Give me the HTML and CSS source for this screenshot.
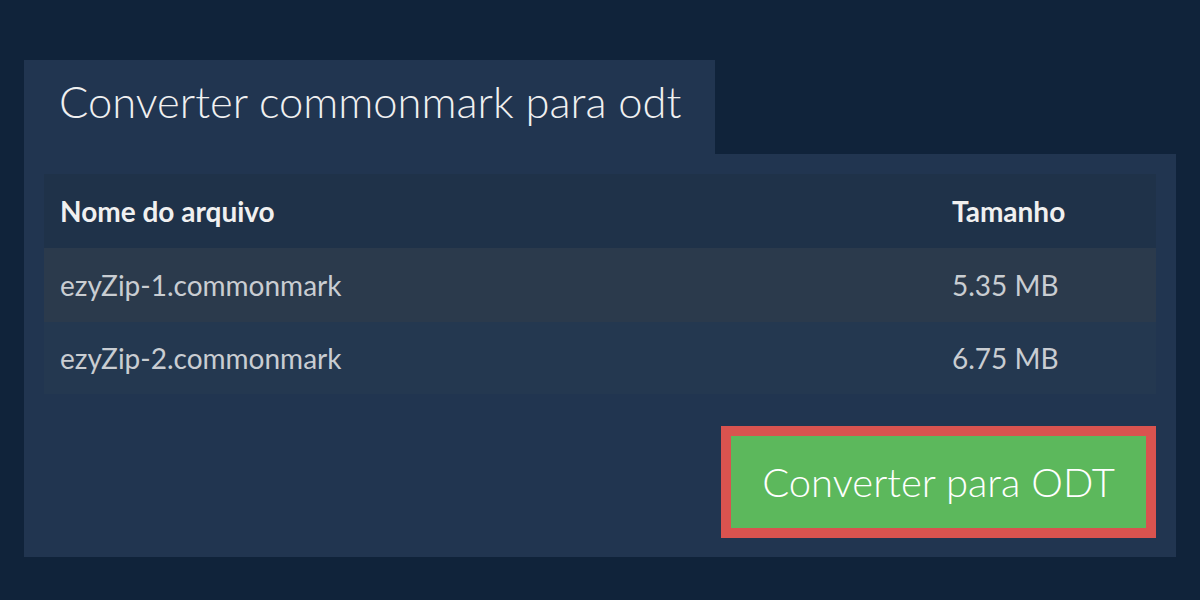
FILE: index.html
```html
<!DOCTYPE html>
<html lang="pt">
<head>
<meta charset="utf-8">
<title>Converter commonmark para odt</title>
<link rel="stylesheet" href="styles.css">
</head>
<body>
<main class="page">
  <div class="tab"><h1 class="title">Converter commonmark para odt</h1></div>
  <section class="panel">
    <table class="files">
      <thead>
        <tr><th class="col-name">Nome do arquivo</th><th class="col-size">Tamanho</th></tr>
      </thead>
      <tbody>
        <tr class="odd"><td>ezyZip-1.commonmark</td><td>5.35 MB</td></tr>
        <tr class="even"><td>ezyZip-2.commonmark</td><td>6.75 MB</td></tr>
      </tbody>
    </table>
    <div class="actions">
      <button class="convert">Converter para ODT</button>
    </div>
  </section>
</main>
</body>
</html>
```
FILE: styles.css
```css
html, body {
  margin: 0;
  padding: 0;
  background: #10233a;
  font-family: Lato, "Liberation Sans", sans-serif;
}
.page {
  padding: 60px 24px 0 24px;
}
.tab {
  display: inline-block;
  background: #213550;
  width: 691px;
  height: 94px;
  box-sizing: border-box;
  padding: 0 0 0 35px;
}
.title {
  margin: 0;
  font-weight: 300;
  font-size: 43.5px;
  line-height: 82px;
  color: #f0f0f0;
}
.panel {
  background: #213550;
  padding: 20px 20px 19px 20px;
  display: flex;
  flex-direction: column;
}
.files {
  width: 100%;
  border-collapse: collapse;
  font-size: 28px;
}
.files th, .files td {
  text-align: left;
  padding: 0 16px;
  height: 74px;
}
.files th {
  background: #1f3249;
  color: #f0f0f0;
  font-weight: 700;
}
.files td {
  color: #c9cdd2;
  font-weight: 400;
}
.col-size {
  width: 188px;
}
.odd td { background: #2b3a4c; }
.even td { background: #243850; height: 72px; }
.actions {
  display: flex;
  justify-content: flex-end;
  padding-top: 32px;
}
.convert {
  width: 435px;
  height: 112px;
  box-sizing: border-box;
  border: 10px solid #d9534f;
  background: #5cb85c;
  color: #ffffff;
  font-family: Lato, "Liberation Sans", sans-serif;
  font-weight: 300;
  font-size: 40px;
  padding: 0;
}
```
